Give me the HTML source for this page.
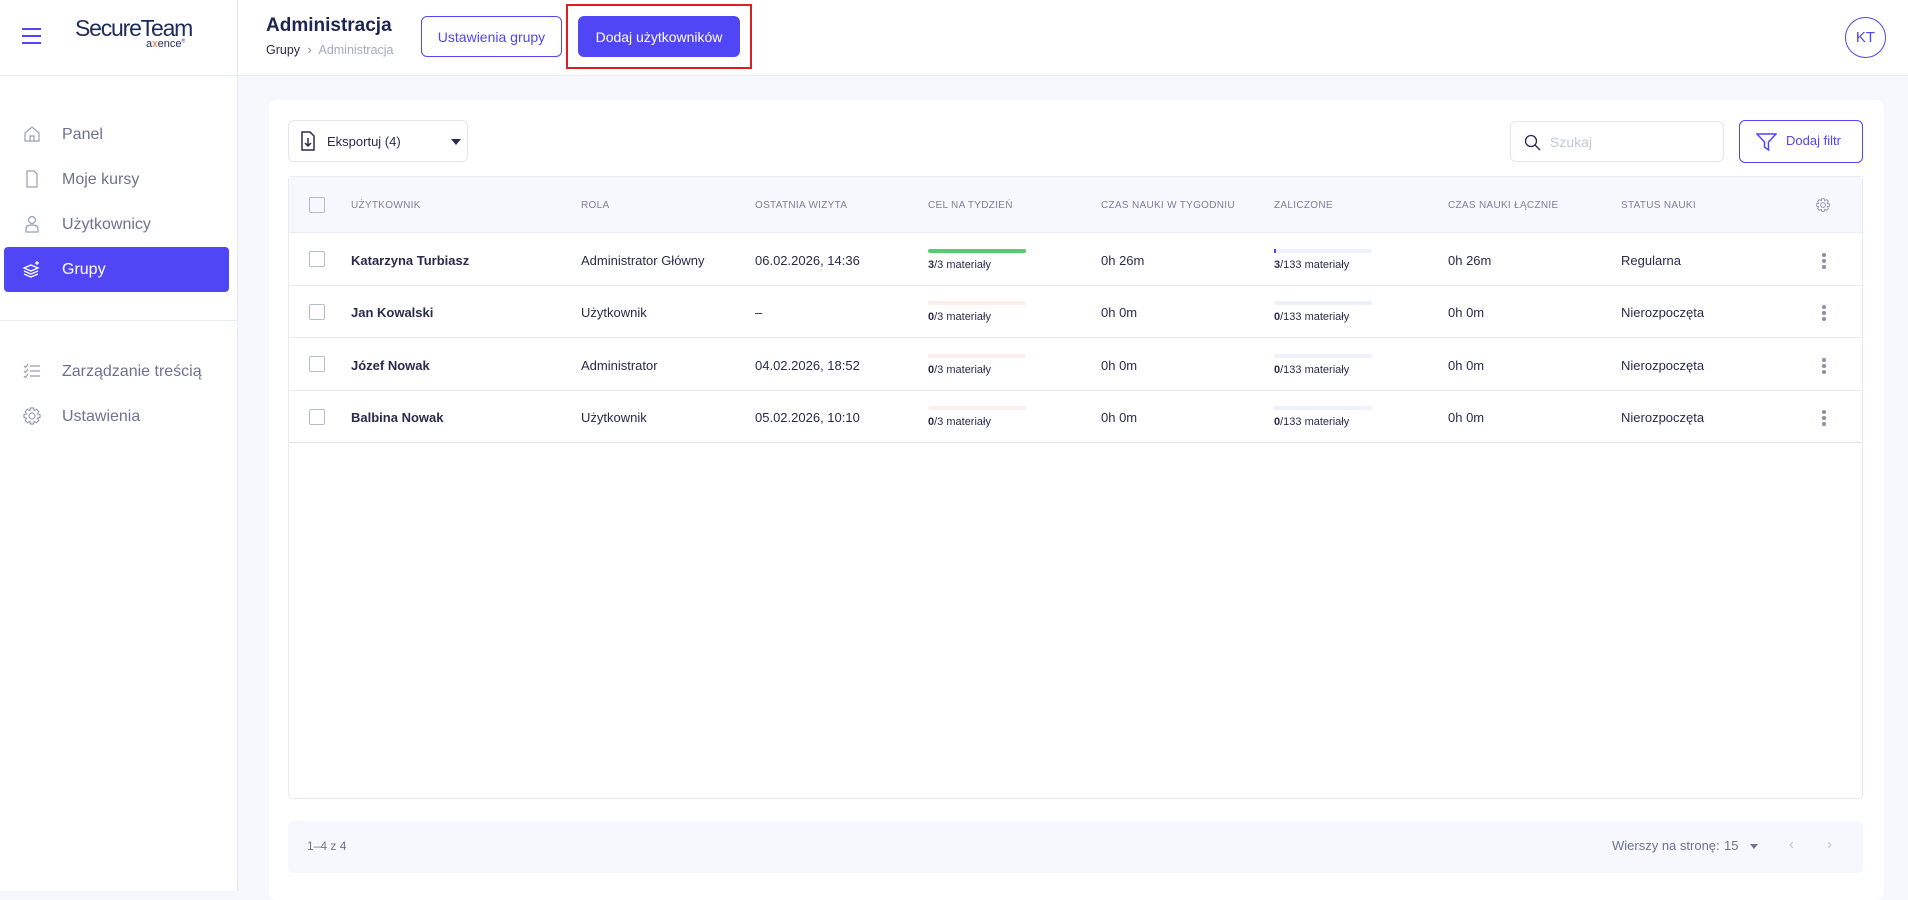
<!DOCTYPE html>
<html><head><meta charset="utf-8"><style>
*{box-sizing:border-box;margin:0;padding:0}
body{width:1908px;height:891px;overflow:hidden;background:#f7f8fd;font-family:"Liberation Sans",sans-serif;color:#2b2a4c;position:relative}
.abs{position:absolute}
#hdr{left:0;top:0;width:1908px;height:76px;background:#fff;border-bottom:1px solid #e8ebf3}
#side{left:0;top:76px;width:238px;height:815px;background:#fff;border-right:1px solid #e8ebf3}
#sidehead{left:237px;top:0;width:1px;height:76px;background:#e8ebf3}
.nav{position:absolute;left:4px;width:225px;height:45px;display:flex;align-items:center;padding-left:58px;font-size:16px;color:#6e7290;border-radius:4px}
.nav svg{position:absolute;left:18px;top:12px}
.nav.act{background:#5046f5;color:#fff}
.btn{position:absolute;height:41px;border-radius:6px;font-size:14px;display:flex;align-items:center;justify-content:center}
#card{left:269px;top:100px;width:1615px;height:800px;background:#fff;border-radius:8px}
#tbl{left:288px;top:176px;width:1575px;height:623px;border:1px solid #e8ebf3;border-radius:4px;background:#fff}
.th{position:absolute;top:0;left:0;width:100%;height:56px;background:#f7f8fd;border-bottom:1px solid #e8ebf3}
.row{position:absolute;left:0;width:100%;border-bottom:1px solid #e8ebf3}
.c{position:absolute;font-size:13px;white-space:nowrap;margin-top:2px}
.h{font-size:10px;color:#7b7f98;letter-spacing:.3px;top:23px;margin-top:0}
.cb{position:absolute;left:20px;width:16px;height:16px;border:1.5px solid #b7bccd;border-radius:2px}
.bar{position:absolute;height:4px;width:98px;border-radius:2px;margin-top:1px}
.mt{position:absolute;font-size:11px;margin-top:2px}
.dots{position:absolute;left:1533px;width:4px}
.dots i{display:block;width:4px;height:4px;border-radius:2px;background:#8b8fa6;margin-bottom:2px}
</style></head><body>
<div id="hdr" class="abs"></div>
<div id="sidehead" class="abs"></div>
<div class="abs" style="left:22px;top:28px;width:19px">
<div style="height:2px;background:#5046f5;margin-bottom:5px"></div><div style="height:2px;background:#5046f5;margin-bottom:5px"></div><div style="height:2px;background:#5046f5"></div></div>
<div class="abs" style="left:75px;top:15px;font-size:23px;color:#1e2a5a;letter-spacing:-1.2px">SecureTeam</div>
<div class="abs" style="left:146px;top:38px;font-size:11px;color:#1e2a5a">a<span style="color:#f06a2a">x</span>ence<sup style="font-size:5px">®</sup></div>
<div class="abs" style="left:266px;top:15px;font-size:19px;font-weight:bold;color:#1e2550">Administracja</div>
<div class="abs" style="left:266px;top:43px;font-size:12.5px;color:#2b2a4c">Grupy <span style="color:#888;margin:0 4px">›</span> <span style="color:#a6a9bd">Administracja</span></div>
<div class="btn" style="left:421px;top:16px;width:141px;border:1px solid #5046f5;color:#5046f5;background:#fff">Ustawienia grupy</div>
<div class="abs" style="left:566px;top:4px;width:186px;height:65px;border:2px solid #e01e1e"></div>
<div class="btn" style="left:578px;top:16px;width:162px;background:#5046f5;color:#fff">Dodaj użytkowników</div>
<div class="abs" style="left:1845px;top:17px;width:41px;height:41px;border:1.5px solid #5046f5;border-radius:50%;color:#5046f5;font-size:15px;display:flex;align-items:center;justify-content:center">KT</div>

<div id="side" class="abs"></div>
<div class="nav" style="top:112px"><svg width="20" height="20" viewBox="0 0 20 20" fill="none" stroke="#9a9eb5" stroke-width="1.2"><path d="M3 9 L10 3 L17 9 V17 H3 Z M8 17 V12 H12 V17"/></svg>Panel</div>
<div class="nav" style="top:157px"><svg width="20" height="20" viewBox="0 0 20 20" fill="none" stroke="#9a9eb5" stroke-width="1.2"><path d="M5 2 H12 L15 5 V18 H5 Z"/></svg>Moje kursy</div>
<div class="nav" style="top:202px"><svg width="20" height="20" viewBox="0 0 20 20" fill="none" stroke="#9a9eb5" stroke-width="1.2"><circle cx="10" cy="6" r="3.5"/><path d="M4 18 V15 Q4 11 10 11 Q16 11 16 15 V18 Z"/></svg>Użytkownicy</div>
<div class="nav act" style="top:247px"><svg width="20" height="20" viewBox="0 0 20 20" fill="none" stroke="#fff" stroke-width="1.3"><path d="M2 9 L9 6 L16 9 L9 12 Z M2 12 L9 15 L16 12 M2 15 L9 18 L16 15 M15 2 V6 M13 4 H17"/></svg>Grupy</div>
<div class="abs" style="left:0;top:320px;width:238px;height:1px;background:#e8ebf3"></div>
<div class="nav" style="top:349px"><svg width="20" height="20" viewBox="0 0 20 20" fill="none" stroke="#9a9eb5" stroke-width="1.2"><path d="M2 5 L3.5 6.5 L6 3 M2 10 L3.5 11.5 L6 8 M2 15 L3.5 16.5 L6 13 M8 5 H18 M8 10 H18 M8 15 H18"/></svg>Zarządzanie treścią</div>
<div class="nav" style="top:394px"><svg width="20" height="20" viewBox="0 0 20 20" fill="none" stroke="#9a9eb5" stroke-width="1.2"><circle cx="10" cy="10" r="3"/><path d="M8.5 2 H11.5 L12 4.5 L14.5 3.3 L16.7 5.5 L15.5 8 L18 8.5 V11.5 L15.5 12 L16.7 14.5 L14.5 16.7 L12 15.5 L11.5 18 H8.5 L8 15.5 L5.5 16.7 L3.3 14.5 L4.5 12 L2 11.5 V8.5 L4.5 8 L3.3 5.5 L5.5 3.3 L8 4.5 Z"/></svg>Ustawienia</div>

<div id="card" class="abs"></div>
<div class="abs" style="left:288px;top:120px;width:180px;height:42px;border:1px solid #e3e6ef;border-radius:6px;background:#fff">
<svg class="abs" style="left:11px;top:10px" width="16" height="20" viewBox="0 0 16 20" fill="none" stroke="#2b2a4c" stroke-width="1.5"><path d="M2 1 H10 L14 5 V19 H2 Z M8 7 V15 M5 12 L8 15 L11 12"/></svg>
<div class="abs" style="left:38px;top:13px;font-size:13px">Eksportuj (4)</div>
<div class="abs" style="left:162px;top:18px;border:5px solid transparent;border-top:6px solid #2b2a4c"></div></div>
<div class="abs" style="left:1510px;top:121px;width:214px;height:41px;border:1px solid #e3e6ef;border-radius:6px;background:#fff">
<svg class="abs" style="left:13px;top:12px" width="17" height="17" viewBox="0 0 17 17" fill="none" stroke="#2b2a4c" stroke-width="1.3"><circle cx="7" cy="7" r="5.5"/><path d="M11 11 L16 16"/></svg>
<div class="abs" style="left:39px;top:12px;font-size:14px;color:#c5c8d6">Szukaj</div></div>
<div class="abs" style="left:1739px;top:120px;width:124px;height:43px;border:1.5px solid #5046f5;border-radius:6px;background:#fff">
<svg class="abs" style="left:16px;top:12px" width="21" height="19" viewBox="0 0 21 19" fill="none" stroke="#5046f5" stroke-width="1.5"><path d="M1 1 H20 L12.5 9 V17 L8.5 14 V9 Z"/></svg>
<div class="abs" style="left:46px;top:12px;font-size:13px;color:#5046f5">Dodaj filtr</div></div>

<div id="tbl" class="abs">
<div class="th">
<div class="cb" style="top:20px"></div>
<div class="c h" style="left:62px">UŻYTKOWNIK</div>
<div class="c h" style="left:292px">ROLA</div>
<div class="c h" style="left:466px">OSTATNIA WIZYTA</div>
<div class="c h" style="left:639px">CEL NA TYDZIEŃ</div>
<div class="c h" style="left:812px">CZAS NAUKI W TYGODNIU</div>
<div class="c h" style="left:985px">ZALICZONE</div>
<div class="c h" style="left:1159px">CZAS NAUKI ŁĄCZNIE</div>
<div class="c h" style="left:1332px">STATUS NAUKI</div>
<svg class="abs" style="left:1526px;top:20px" width="16" height="16" viewBox="0 0 20 20" fill="none" stroke="#9a9eb5" stroke-width="1.3"><circle cx="10" cy="10" r="3"/><path d="M8.5 2 H11.5 L12 4.5 L14.5 3.3 L16.7 5.5 L15.5 8 L18 8.5 V11.5 L15.5 12 L16.7 14.5 L14.5 16.7 L12 15.5 L11.5 18 H8.5 L8 15.5 L5.5 16.7 L3.3 14.5 L4.5 12 L2 11.5 V8.5 L4.5 8 L3.3 5.5 L5.5 3.3 L8 4.5 Z"/></svg>
</div>
<div class="row" style="top:56px;height:53px">
<div class="cb" style="top:18px"></div>
<div class="c" style="left:62px;top:18px;font-weight:bold">Katarzyna Turbiasz</div>
<div class="c" style="left:292px;top:18px">Administrator Główny</div>
<div class="c" style="left:466px;top:18px">06.02.2026, 14:36</div>
<div class="bar" style="left:639px;top:15px;background:#5acb6c"></div>
<div class="mt" style="left:639px;top:24px"><b>3</b>/3 materiały</div>
<div class="c" style="left:812px;top:18px">0h 26m</div>
<div class="bar" style="left:985px;top:15px;background:#eef0fb"><div style="width:2px;height:4px;background:#5046f5"></div></div>
<div class="mt" style="left:985px;top:24px"><b>3</b>/133 materiały</div>
<div class="c" style="left:1159px;top:18px">0h 26m</div>
<div class="c" style="left:1332px;top:18px">Regularna</div>
<div class="dots" style="top:20px"><i></i><i></i><i></i></div>
</div>
<div class="row" style="top:109px;height:52px">
<div class="cb" style="top:18px"></div>
<div class="c" style="left:62px;top:17px;font-weight:bold">Jan Kowalski</div>
<div class="c" style="left:292px;top:17px">Użytkownik</div>
<div class="c" style="left:466px;top:17px">–</div>
<div class="bar" style="left:639px;top:14px;background:#fdeeee"></div>
<div class="mt" style="left:639px;top:23px"><b>0</b>/3 materiały</div>
<div class="c" style="left:812px;top:17px">0h 0m</div>
<div class="bar" style="left:985px;top:14px;background:#eef0fb"></div>
<div class="mt" style="left:985px;top:23px"><b>0</b>/133 materiały</div>
<div class="c" style="left:1159px;top:17px">0h 0m</div>
<div class="c" style="left:1332px;top:17px">Nierozpoczęta</div>
<div class="dots" style="top:19px"><i></i><i></i><i></i></div>
</div>
<div class="row" style="top:161px;height:53px">
<div class="cb" style="top:18px"></div>
<div class="c" style="left:62px;top:18px;font-weight:bold">Józef Nowak</div>
<div class="c" style="left:292px;top:18px">Administrator</div>
<div class="c" style="left:466px;top:18px">04.02.2026, 18:52</div>
<div class="bar" style="left:639px;top:15px;background:#fdeeee"></div>
<div class="mt" style="left:639px;top:24px"><b>0</b>/3 materiały</div>
<div class="c" style="left:812px;top:18px">0h 0m</div>
<div class="bar" style="left:985px;top:15px;background:#eef0fb"></div>
<div class="mt" style="left:985px;top:24px"><b>0</b>/133 materiały</div>
<div class="c" style="left:1159px;top:18px">0h 0m</div>
<div class="c" style="left:1332px;top:18px">Nierozpoczęta</div>
<div class="dots" style="top:20px"><i></i><i></i><i></i></div>
</div>
<div class="row" style="top:214px;height:52px;border-bottom:1px solid #dfe2ea">
<div class="cb" style="top:18px"></div>
<div class="c" style="left:62px;top:17px;font-weight:bold">Balbina Nowak</div>
<div class="c" style="left:292px;top:17px">Użytkownik</div>
<div class="c" style="left:466px;top:17px">05.02.2026, 10:10</div>
<div class="bar" style="left:639px;top:14px;background:#fdeeee"></div>
<div class="mt" style="left:639px;top:23px"><b>0</b>/3 materiały</div>
<div class="c" style="left:812px;top:17px">0h 0m</div>
<div class="bar" style="left:985px;top:14px;background:#eef0fb"></div>
<div class="mt" style="left:985px;top:23px"><b>0</b>/133 materiały</div>
<div class="c" style="left:1159px;top:17px">0h 0m</div>
<div class="c" style="left:1332px;top:17px">Nierozpoczęta</div>
<div class="dots" style="top:19px"><i></i><i></i><i></i></div>
</div>
</div>

<div class="abs" style="left:288px;top:821px;width:1575px;height:52px;background:#f7f8fd;border-radius:4px">
<div class="abs" style="left:19px;top:18px;font-size:12px;color:#6e7290">1–4 z 4</div>
<div class="abs" style="left:1324px;top:17px;font-size:13px;color:#6e7290">Wierszy na stronę:</div>
<div class="abs" style="left:1436px;top:17px;font-size:13px;color:#6e7290">15</div>
<div class="abs" style="left:1462px;top:23px;border:4px solid transparent;border-top:5px solid #6e7290"></div>
<div class="abs" style="left:1501px;top:15px;font-size:15px;color:#c0c3d2">‹</div>
<div class="abs" style="left:1539px;top:15px;font-size:15px;color:#c0c3d2">›</div>
</div>
</body></html>
